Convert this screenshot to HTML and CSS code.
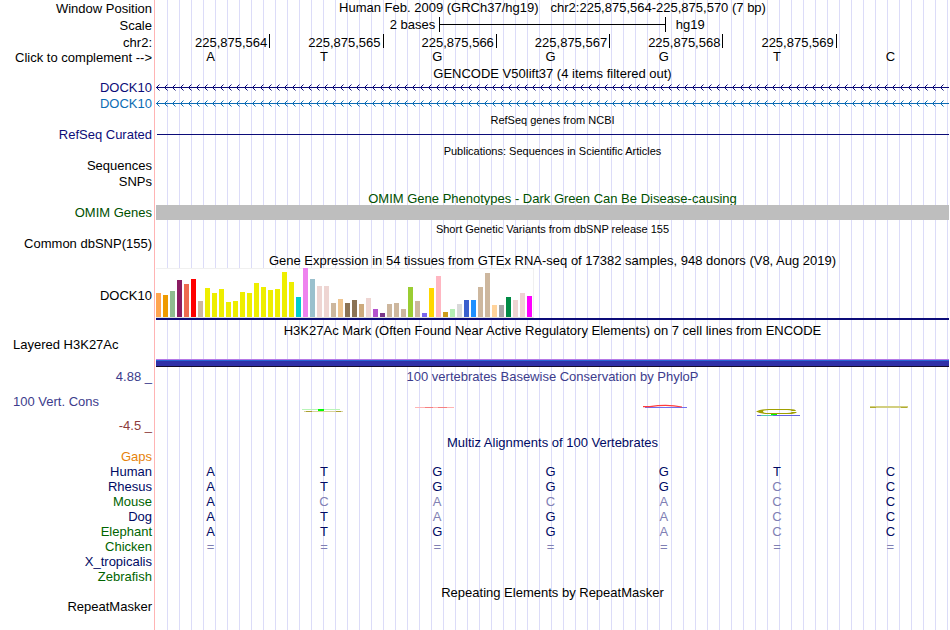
FILE: index.html
```html
<!DOCTYPE html>
<html lang="en">
<head>
  <meta charset="UTF-8" />
  <meta name="viewport" content="width=device-width, initial-scale=1.0" />
  <title>Genome Browser - hg19 chr2:225,875,564-225,875,570</title>
  <link rel="stylesheet" href="styles.css">
</head>
<body>
  <svg class="defs" aria-hidden="true">
    <defs>
      <pattern id="intron-coding" class="coding" width="8" height="7" patternUnits="userSpaceOnUse">
        <path fill="currentColor" d="M0 3h8v1H0zM1 2h1v1H1zM2 1h1v1H2zM1 4h1v1H1zM2 5h1v1H2z" />
        <path fill="currentColor" opacity="0.5" d="M3 0h1v1H3zM3 6h1v1H3z" />
      </pattern>
      <pattern id="intron-transcript" class="transcript" width="8" height="7" patternUnits="userSpaceOnUse">
        <path fill="currentColor" d="M0 3h8v1H0zM1 2h1v1H1zM2 1h1v1H2zM1 4h1v1H1zM2 5h1v1H2z" />
        <path fill="currentColor" opacity="0.5" d="M3 0h1v1H3zM3 6h1v1H3z" />
      </pattern>
    </defs>
  </svg>

  <main class="tracks">
    <div class="row header">
      <div class="label">Window Position</div>
      <div class="title position"><span>Human Feb. 2009 (GRCh37/hg19)</span><span>chr2:225,875,564-225,875,570 (7 bp)</span></div>
    </div>
    <div class="row header">
      <div class="label">Scale</div>
      <div class="data scale"><span class="size">2 bases</span><span class="ruler"></span><span class="db">hg19</span></div>
    </div>
    <div class="row tall">
      <div class="label">chr2:</div>
      <div class="data coords">
        <span>225,875,564</span><span>225,875,565</span><span>225,875,566</span><span>225,875,567</span><span>225,875,568</span><span>225,875,569</span>
      </div>
    </div>
    <div class="row complement">
      <div class="label">Click to complement --&gt;</div>
      <div class="data bases"><span>A</span><span>T</span><span>G</span><span>G</span><span>G</span><span>T</span><span>C</span></div>
    </div>

    <div class="row"><div class="title">GENCODE V50lift37 (4 items filtered out)</div></div>
    <div class="row coding">
      <div class="label">DOCK10</div>
      <div class="data"><svg class="gene"><rect width="100%" height="7" fill="url(#intron-coding)" /></svg></div>
    </div>
    <div class="row tall transcript">
      <div class="label">DOCK10</div>
      <div class="data"><svg class="gene"><rect width="100%" height="7" fill="url(#intron-transcript)" /></svg></div>
    </div>

    <div class="row tall"><div class="title small">RefSeq genes from NCBI</div></div>
    <div class="row coding">
      <div class="label">RefSeq Curated</div>
      <div class="data"><div class="line"></div></div>
    </div>

    <div class="row tall"><div class="title small">Publications: Sequences in Scientific Articles</div></div>
    <div class="row"><div class="label">Sequences</div></div>
    <div class="row tall"><div class="label">SNPs</div></div>

    <div class="row tall omim"><div class="title">OMIM Gene Phenotypes - Dark Green Can Be Disease-causing</div></div>
    <div class="row omim">
      <div class="label">OMIM Genes</div>
      <div class="data"><div class="block"></div></div>
    </div>

    <div class="row tall"><div class="title small">Short Genetic Variants from dbSNP release 155</div></div>
    <div class="row"><div class="label">Common dbSNP(155)</div></div>

    <div class="row header"><div class="title">Gene Expression in 54 tissues from GTEx RNA-seq of 17382 samples, 948 donors (V8, Aug 2019)</div></div>
    <div class="row gtex">
      <div class="label">DOCK10</div>
      <div class="data"><div class="bars" id="bars"></div></div>
    </div>

    <div class="row heading"><div class="title">H3K27Ac Mark (Often Found Near Active Regulatory Elements) on 7 cell lines from ENCODE</div></div>
    <div class="row h3k">
      <div class="label left">Layered H3K27Ac</div>
      <div class="data"><div class="signal"></div></div>
    </div>

    <div class="row cons">
      <div class="label range">
        <span>4.88 _</span>
        <span class="name">100 Vert. Cons</span>
        <span class="min">-4.5 _</span>
      </div>
      <div class="data">
        <div class="title">100 vertebrates Basewise Conservation by PhyloP</div>
        <div class="bases logos">
          <span></span>
          <span><svg viewBox="0 0 48 12">
            <path stroke="#b8f5b8" d="M2 5.500H40" />
            <path stroke="#d8d29a" d="M4 7.500H43" />
            <path stroke="#aaa030" d="M6 7.500H12M36 7.500H41" />
            <path fill="#00ff00" d="M18 5h6v2h-6z" />
          </svg></span>
          <span><svg viewBox="0 0 48 12">
            <path stroke="#ffb4b4" d="M2 3.500H41" />
            <path stroke="#f58080" d="M12 3.500H20M25 3.500H34" />
          </svg></span>
          <span></span>
          <span><svg viewBox="0 0 48 12">
            <path stroke="#7070f0" d="M5 3.500H47" />
            <path stroke="#ff3c3c" stroke-width="1.200" fill="none" d="M3 2.700H10Q22 0.700 34 1.800L42 3" />
          </svg></span>
          <span><svg viewBox="0 0 48 12">
            <path fill="#a0a000" fill-rule="evenodd" d="M3 7.500Q8 5 16 5H36Q43 5 43 7H39Q38 6 34 6H16Q10 6 10 7.500Q10 9 16 9H34Q38 9 39 8H44Q42 10 36 10H16Q8 10 3 7.500z" />
            <path stroke="#6464e0" d="M4 11.500H47" />
            <path stroke="#50c8b4" d="M8 11.500H20" />
            <path fill="#00ff00" d="M18 10h6v1h-6z" />
          </svg></span>
          <span><svg viewBox="0 0 48 12">
            <path stroke="#d2cf80" stroke-width="2" d="M4 3H42" />
            <path stroke="#b0ab30" d="M4 3.500H10M35 3.500H41" />
          </svg></span>
        </div>
      </div>
    </div>

    <div class="row multiz"><div class="title">Multiz Alignments of 100 Vertebrates</div></div>
    <table class="multiz">
      <tr><th scope="row" class="gaps">Gaps</th><td></td><td></td><td></td><td></td><td></td><td></td><td></td></tr>
      <tr><th scope="row">Human</th><td>A</td><td>T</td><td>G</td><td>G</td><td>G</td><td>T</td><td>C</td></tr>
      <tr><th scope="row">Rhesus</th><td>A</td><td>T</td><td>G</td><td>G</td><td>G</td><td class="diff">C</td><td>C</td></tr>
      <tr><th scope="row" class="alt">Mouse</th><td>A</td><td class="diff">C</td><td class="diff">A</td><td class="diff">C</td><td class="diff">A</td><td class="diff">C</td><td>C</td></tr>
      <tr><th scope="row">Dog</th><td>A</td><td>T</td><td class="diff">A</td><td>G</td><td class="diff">A</td><td class="diff">C</td><td>C</td></tr>
      <tr><th scope="row" class="alt">Elephant</th><td>A</td><td>T</td><td>G</td><td>G</td><td class="diff">A</td><td class="diff">C</td><td>C</td></tr>
      <tr class="diff"><th scope="row" class="alt">Chicken</th><td>=</td><td>=</td><td>=</td><td>=</td><td>=</td><td>=</td><td>=</td></tr>
      <tr><th scope="row">X_tropicalis</th><td></td><td></td><td></td><td></td><td></td><td></td><td></td></tr>
      <tr><th scope="row" class="alt">Zebrafish</th><td></td><td></td><td></td><td></td><td></td><td></td><td></td></tr>
    </table>

    <div class="row"><div class="title">Repeating Elements by RepeatMasker</div></div>
    <div class="row"><div class="label">RepeatMasker</div></div>
  </main>

  <script src="gtex.js"></script>
</body>
</html>
```

FILE: styles.css
```css
* {
  box-sizing: border-box;
}
body {
  margin: 0;
  padding-right: 1px;
  background: #fff;
  color: #000;
  font-family: "Liberation Sans", Arial, Helvetica, sans-serif;
  font-size: 13px;
  line-height: 15px;
}
.defs {
  position: absolute;
  width: 0;
  height: 0;
}

/* red divider at the end of the labels, then a guide line every 12px */
.tracks {
  min-height: 100vh;
  background-image:
    linear-gradient(#ffb4b4, #ffb4b4),
    repeating-linear-gradient(to right, transparent 0 11px, #dcdcf8 11px 12px);
  background-position: 154px 0, 156px 0;
  background-size: 1px 100%, 100% 100%;
  background-repeat: no-repeat;
}

.row {
  display: grid;
  grid-template-columns: 156px 1fr;
  height: 15px;
}
.row.tall {
  height: 16px;
  line-height: 17px;
}
.row.header {
  height: 17px;
  line-height: 17px;
}
.row.heading {
  height: 17px;
}
.label {
  grid-column: 1;
  padding-right: 4px;
  text-align: right;
  white-space: nowrap;
}
.label.left {
  padding-left: 13px;
  text-align: left;
}
.data {
  grid-column: 2;
  min-width: 0;
}
.title {
  grid-column: 2;
  line-height: 17px;
  text-align: center;
  white-space: nowrap;
}
.tall .title,
.header .title {
  line-height: 19px;
}
.heading .title {
  line-height: 21px;
}
.tall .small {
  font-size: 11px;
  line-height: 18px;
}

/* position and scale */
.header .position {
  display: flex;
  justify-content: center;
  gap: 12px;
  line-height: 15px;
}
.scale {
  display: grid;
  grid-template-columns: 5fr 4fr 5fr;
}
.scale .size {
  padding-right: 4px;
  line-height: 15px;
  text-align: right;
}
.scale .db {
  padding-left: 10px;
  line-height: 15px;
}
.ruler {
  height: 15px;
  border: solid #000;
  border-width: 0 1px;
  background: linear-gradient(#000, #000) 0 7px / 100% 1px no-repeat;
}
.coords,
.bases {
  display: grid;
  grid-template-columns: repeat(7, 1fr);
}
.coords {
  margin: 0 -1px 0 1px;
}
.coords span {
  height: 14px;
  padding-right: 2px;
  border-right: 1px solid #000;
  text-align: right;
}
.bases span {
  padding-right: 4px;
  text-align: center;
}
.complement .bases {
  line-height: 13px;
}

/* gene tracks */
.coding {
  color: #0c0c78;
}
.transcript {
  color: #0c6cb4;
}
.gene {
  display: block;
  width: 100%;
  height: 7px;
  margin-top: 4px;
}
.transcript .gene {
  margin-top: 5px;
}
.line {
  height: 1px;
  margin: 7px 0 0 1px;
  background: #0c0c78;
}
.omim {
  color: #005000;
}
.block {
  height: 15px;
  background: #bebebe;
}

/* GTEx */
.gtex {
  height: 52px;
}
.gtex .label {
  align-self: center;
  padding-top: 3px;
}
.gtex .data {
  border-bottom: 2px solid #0c0c78;
}
.bars {
  display: flex;
  align-items: flex-end;
  gap: 2px;
  width: 378px;
  height: 50px;
  border-top: 1px solid #f0f0f0;
  border-right: 1px solid #f0f0f0;
  border-bottom: 1px solid #dcdcdc;
  background: #fff;
}
.bars i {
  width: 5px;
}

/* H3K27Ac */
.h3k {
  height: 30px;
}
.signal {
  height: 8px;
  margin-top: 22px;
  border-top: 1px solid #b478e6;
  border-bottom: 1px solid #140a28;
  background: linear-gradient(#2864d2 1px, #3030a8 1px);
}

/* conservation */
.cons {
  height: 67px;
  color: #3c3c8c;
}
.cons .title {
  line-height: 19px;
}
.range {
  display: flex;
  flex-direction: column;
  justify-content: space-between;
  padding-top: 2px;
  padding-bottom: 1px;
}
.range .name {
  padding-left: 13px;
  text-align: left;
}
.range .min {
  color: #8c3c3c;
}
.logos {
  margin-top: 18px;
}
.logos svg {
  display: block;
  width: 48px;
  height: 12px;
  margin: 0 auto;
}

/* alignments */
.multiz {
  color: #000a64;
}
table.multiz {
  width: 100%;
  table-layout: fixed;
  border-collapse: collapse;
}
.multiz tr {
  height: 15px;
}
.multiz th {
  width: 156px;
  padding: 0 4px 0 0;
  font-weight: normal;
  text-align: right;
}
.multiz td {
  padding: 0 4px 0 0;
  text-align: center;
}
.multiz .alt {
  color: #006400;
}
.multiz .gaps {
  color: #e6820a;
}
.multiz td.diff,
.multiz .diff td {
  color: #8080b4;
}
```

FILE: gtex.js
```js
// [color, height] of each tissue, in GTEx order
const tissues = [
  ['#ffa54f', 24], ['#ee9a00', 22], ['#8fbc8f', 26], ['#8b1c62', 37], ['#ee6a50', 33], ['#ff0000', 38],
  ['#cdb79e', 16], ['#eeee00', 29], ['#eeee00', 24], ['#eeee00', 28], ['#eeee00', 15], ['#eeee00', 16],
  ['#eeee00', 25], ['#eeee00', 24], ['#eeee00', 34], ['#eeee00', 30], ['#eeee00', 27], ['#eeee00', 28],
  ['#eeee00', 45], ['#eeee00', 35], ['#00cdcd', 20], ['#ee82ee', 49], ['#9ac0cd', 38], ['#eed5d2', 31],
  ['#eed5d2', 31], ['#cdb79e', 14], ['#eec591', 18], ['#8b7355', 14], ['#8b7355', 17], ['#cdaa7d', 13],
  ['#eed5d2', 19], ['#b452cd', 8], ['#7a378b', 4], ['#cdb79e', 13], ['#cdb79e', 14], ['#cdb79e', 8],
  ['#9acd32', 30], ['#cdb79e', 16], ['#7a67ee', 4], ['#ffd700', 29], ['#ffb6c1', 41], ['#cd9b1d', 5],
  ['#b4eeb4', 8], ['#d9d9d9', 13], ['#3a5fcd', 17], ['#1e90ff', 17], ['#cdb79e', 30], ['#cdb79e', 44],
  ['#ffd39b', 12], ['#a6a6a6', 12], ['#008b45', 20], ['#eed5d2', 17], ['#eed5d2', 24], ['#ff00ff', 21]
];

const bars = document.getElementById('bars');
tissues.forEach(([color, height]) => {
  const bar = document.createElement('i');
  bar.style.height = height + 'px';
  bar.style.background = color;
  bars.appendChild(bar);
});
```
